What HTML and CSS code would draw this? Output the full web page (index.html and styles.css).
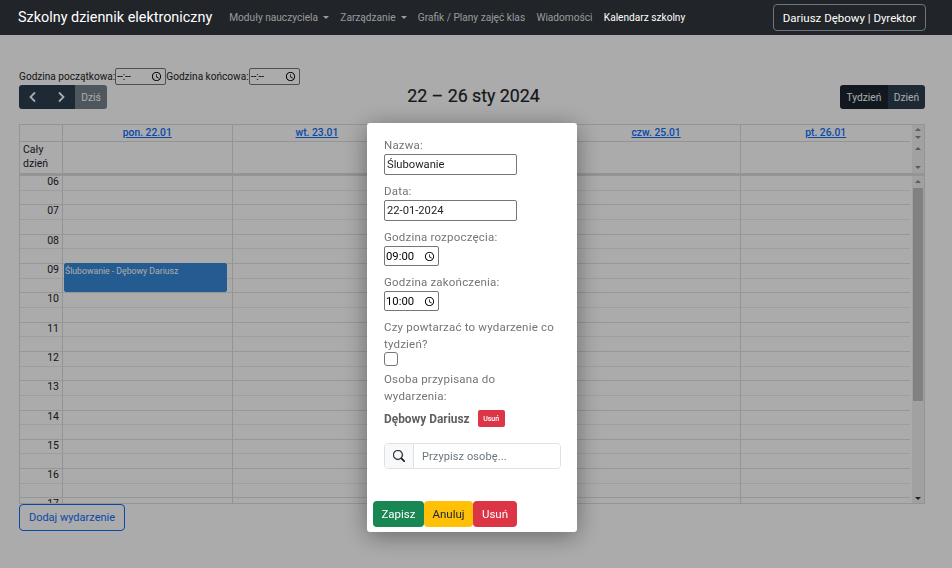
FILE: index.html
```html
<!DOCTYPE html>
<html lang="pl">
<head>
    <meta charset="UTF-8">
    <meta name="viewport" content="width=device-width, initial-scale=1.0">
    <title>Kalendarz szkolny</title>
    <link rel="stylesheet" href="styles.css">
</head>
<body>
    <nav class="navbar">
        <a class="brand" href="#">Szkolny dziennik elektroniczny</a>
        <ul class="nav-links">
            <li class="nav-link caret">Moduły nauczyciela</li>
            <li class="nav-link caret">Zarządzanie</li>
            <li class="nav-link">Grafik / Plany zajęć klas</li>
            <li class="nav-link">Wiadomości</li>
            <li class="nav-link active">Kalendarz szkolny</li>
        </ul>
        <button class="user-btn">Dariusz Dębowy | Dyrektor</button>
    </nav>

    <main class="content">
        <div class="hours-filter">
            <label>Godzina początkowa:</label>
            <input type="time" class="time-small">
            <label>Godzina końcowa:</label>
            <input type="time" class="time-small">
        </div>

        <div class="toolbar">
            <div class="btn-group">
                <button class="fc-btn"><svg width="10" height="12" viewBox="0 0 10 12"><path d="M7 1.500 2.500 6 7 10.500" fill="none" stroke="#fff" stroke-width="1.800"/></svg></button>
                <button class="fc-btn"><svg width="10" height="12" viewBox="0 0 10 12"><path d="M3 1.500 7.500 6 3 10.500" fill="none" stroke="#fff" stroke-width="1.800"/></svg></button>
                <button class="fc-btn today" disabled>Dziś</button>
            </div>
            <h2 class="cal-title">22 – 26 sty 2024</h2>
            <div class="btn-group">
                <button class="fc-btn view selected">Tydzień</button>
                <button class="fc-btn view">Dzień</button>
            </div>
        </div>

        <div class="calendar">
            <div class="cal-head">
                <div class="head-main">
                    <div class="day-row">
                        <div class="axis"></div>
                        <a class="day" href="#">pon. 22.01</a>
                        <a class="day" href="#">wt. 23.01</a>
                        <a class="day" href="#">śr. 24.01</a>
                        <a class="day" href="#">czw. 25.01</a>
                        <a class="day" href="#">pt. 26.01</a>
                    </div>
                    <div class="allday-row">
                        <div class="axis allday-label">Cały dzień</div>
                        <div class="allday-cell"></div>
                        <div class="allday-cell"></div>
                        <div class="allday-cell"></div>
                        <div class="allday-cell"></div>
                        <div class="allday-cell"></div>
                    </div>
                </div>
                <div class="mini-scroll">
                    <div class="mini-track short"><span class="arrow up"></span><span class="arrow down"></span></div>
                    <div class="mini-track tall"><span class="arrow up"></span><span class="arrow down"></span></div>
                </div>
            </div>

            <div class="cal-body">
                <div class="slots">
                    <div class="slot hour"><span class="axis">06</span></div><div class="slot"></div>
                    <div class="slot hour"><span class="axis">07</span></div><div class="slot"></div>
                    <div class="slot hour"><span class="axis">08</span></div><div class="slot"></div>
                    <div class="slot hour"><span class="axis">09</span></div><div class="slot"></div>
                    <div class="slot hour"><span class="axis">10</span></div><div class="slot"></div>
                    <div class="slot hour"><span class="axis">11</span></div><div class="slot"></div>
                    <div class="slot hour"><span class="axis">12</span></div><div class="slot"></div>
                    <div class="slot hour"><span class="axis">13</span></div><div class="slot"></div>
                    <div class="slot hour"><span class="axis">14</span></div><div class="slot"></div>
                    <div class="slot hour"><span class="axis">15</span></div><div class="slot"></div>
                    <div class="slot hour"><span class="axis">16</span></div><div class="slot"></div>
                    <div class="slot hour"><span class="axis">17</span></div><div class="slot"></div>

                    <div class="columns">
                        <div class="axis"></div>
                        <div class="col"><div class="event">Ślubowanie - Dębowy Dariusz</div></div>
                        <div class="col"></div>
                        <div class="col"></div>
                        <div class="col"></div>
                        <div class="col"></div>
                    </div>
                </div>
                <div class="scrollbar">
                    <span class="arrow up"></span>
                    <div class="thumb"></div>
                    <span class="arrow down dark"></span>
                </div>
            </div>
        </div>

        <button class="add-btn">Dodaj wydarzenie</button>
    </main>

    <div class="backdrop"></div>

    <div class="modal">
        <label class="field-label">Nazwa:</label>
        <input type="text" class="text-input" value="Ślubowanie">
        <label class="field-label">Data:</label>
        <input type="text" class="text-input" value="22-01-2024">
        <label class="field-label">Godzina rozpoczęcia:</label>
        <input type="time" class="time-input" value="09:00">
        <label class="field-label">Godzina zakończenia:</label>
        <input type="time" class="time-input" value="10:00">
        <label class="field-label repeat-label">Czy powtarzać to wydarzenie co tydzień?</label>
        <span class="checkbox"></span>
        <label class="field-label person-label">Osoba przypisana do wydarzenia:</label>
        <div class="person">
            <strong>Dębowy Dariusz</strong>
            <button class="btn-remove">Usuń</button>
        </div>
        <div class="search-group">
            <span class="search-icon">
                <svg width="12" height="12" viewBox="0 0 16 16" fill="#212529"><path d="M11.742 10.344a6.500 6.500 0 1 0-1.397 1.398h-.001c.03.04.062.078.098.115l3.850 3.850a1 1 0 0 0 1.415-1.414l-3.850-3.850a1.007 1.007 0 0 0-.115-.1zM12 6.500a5.500 5.500 0 1 1-11 0 5.500 5.500 0 0 1 11 0z" stroke="#212529" stroke-width=".6"/></svg>
            </span>
            <input type="text" class="search-input" placeholder="Przypisz osobę...">
        </div>
        <div class="modal-actions">
            <button class="btn green">Zapisz</button>
            <button class="btn yellow">Anuluj</button>
            <button class="btn red">Usuń</button>
        </div>
    </div>
</body>
</html>
```

FILE: styles.css
```css
* {
    box-sizing: border-box;
}
html, body {
    height: 100%;
}
body {
    margin: 0;
    overflow: hidden;
    font-family: Roboto, "Liberation Sans", sans-serif;
    font-size: 12px;
    color: #212529;
    background-color: #fff;
}
button {
    font-family: inherit;
}

/* pasek nawigacji */
.navbar {
    position: relative;
    z-index: 3;
    display: flex;
    align-items: center;
    height: 35px;
    padding: 0 26px 0 18px;
    background-color: #212529;
}
.brand {
    margin-right: 17px;
    font-size: 14.4px;
    color: #fff;
    text-decoration: none;
}
.nav-links {
    display: flex;
    gap: 11.3px;
    flex: 1;
    margin: 0;
    padding: 0;
    list-style: none;
}
.nav-link {
    font-size: 10.15px;
    color: rgba(255, 255, 255, 0.55);
}
.nav-link.active {
    color: #fff;
}
.caret::after {
    content: "";
    display: inline-block;
    margin-left: 5px;
    vertical-align: 2px;
    border-top: 3px solid;
    border-left: 3px solid transparent;
    border-right: 3px solid transparent;
}
.user-btn {
    height: 27px;
    width: 153px;
    padding: 0;
    font-size: 11.5px;
    color: #fff;
    background: transparent;
    border: 1px solid #6c757d;
    border-radius: 4px;
}

/* strona */
.content {
    padding: 32px 27px 0 19px;
}
.hours-filter {
    display: flex;
    align-items: center;
    height: 18px;
    font-size: 10.1px;
}
.time-small {
    width: 51px;
    height: 17px;
    margin: 0;
    padding: 0 3px 0 1px;
    font: 10px Roboto, sans-serif;
    border: 1px solid #767676;
    border-radius: 2px;
}
input::-webkit-datetime-edit-ampm-field {
    display: none;
}
input::-webkit-datetime-edit-hour-field,
input::-webkit-datetime-edit-minute-field {
    padding: 0;
}
input::-webkit-calendar-picker-indicator {
    margin: 0;
    padding: 0;
    width: 11px;
    height: 11px;
}
.toolbar {
    display: flex;
    align-items: center;
    justify-content: space-between;
    height: 24px;
}
.btn-group {
    display: flex;
    height: 24px;
    border-radius: 3px;
    overflow: hidden;
}
.fc-btn {
    display: flex;
    align-items: center;
    justify-content: center;
    width: 28px;
    padding: 0;
    font-size: 10.2px;
    color: #fff;
    background-color: #2c3e50;
    border: none;
}
.fc-btn.today {
    width: 32px;
    background-color: #2c3e50;
    opacity: 0.65;
}
.fc-btn.view {
    width: 37px;
}
.fc-btn.selected {
    width: 48px;
    background-color: #1a252f;
}
.cal-title {
    margin: 0 0 4px;
    font-size: 17.8px;
    font-weight: 400;
    -webkit-text-stroke: 0.2px;
}

/* kalendarz */
.calendar {
    margin-top: 15px;
    height: 380px;
    border: 1px solid #ddd;
    display: flex;
    flex-direction: column;
}
.cal-head {
    display: flex;
    height: 51px;
    flex: none;
    border-bottom: 3px solid #ddd;
}
.head-main {
    flex: 1;
}
.day-row, .allday-row, .columns {
    display: grid;
    grid-template-columns: 42px repeat(5, 1fr);
}
.day-row {
    height: 17px;
    border-bottom: 1px solid #ddd;
}
.day {
    border-left: 1px solid #ddd;
    font-size: 10.3px;
    font-weight: 500;
    line-height: 16px;
    text-align: center;
    color: #0d6efd;
}
.allday-row {
    height: 31px;
}
.allday-label {
    padding: 1px 11px 0 3px;
    font-size: 10.5px;
    line-height: 14px;
}
.allday-cell {
    border-left: 1px solid #ddd;
}
.mini-scroll {
    flex: none;
    width: 14px;
    background-color: #f1f1f1;
    border-left: 2px solid #fff;
}
.mini-track {
    display: flex;
    flex-direction: column;
    align-items: center;
    justify-content: space-between;
    padding: 3px 0;
}
.mini-track.short {
    height: 17px;
}
.mini-track.tall {
    height: 31px;
    padding: 5px 0 4px;
}
.arrow {
    display: block;
    flex: none;
    border-left: 3px solid transparent;
    border-right: 3px solid transparent;
}
.arrow.up {
    border-bottom: 3px solid #888;
}
.arrow.down {
    border-top: 3px solid #888;
}
.arrow.dark {
    border-top-color: #333;
}
.cal-body {
    display: flex;
    flex: 1;
    min-height: 0;
}
.slots {
    position: relative;
    flex: 1;
    overflow: hidden;
}
.slot {
    height: 14.67px;
    border-bottom: 1px solid #e4e4e4;
}
.slot.hour {
    border-bottom-color: #ececec;
}
.slot:nth-child(even) {
    border-bottom-color: #e2e2e2;
}
.slot .axis {
    display: block;
    width: 42px;
    padding-right: 3px;
    font-size: 10.5px;
    line-height: 12px;
    text-align: right;
}
.columns {
    position: absolute;
    top: 0;
    left: 0;
    right: 0;
    height: 360px;
}
.col {
    position: relative;
    border-left: 1px solid #ddd;
}
.event {
    position: absolute;
    top: 87px;
    left: 1px;
    right: 5px;
    height: 29px;
    padding: 2px 0;
    font-size: 8.7px;
    line-height: 11px;
    color: #fff;
    background-color: #3788d8;
    border: 1px solid #3788d8;
    border-radius: 2px;
}
.scrollbar {
    position: relative;
    flex: none;
    width: 14px;
    padding: 4px 0 3px;
    display: flex;
    flex-direction: column;
    align-items: center;
    background-color: #f1f1f1;
    border-left: 2px solid #fff;
}
.thumb {
    width: 10px;
    height: 213px;
    margin: 5px 0 auto;
    background-color: #c1c1c1;
}
.add-btn {
    display: block;
    height: 27px;
    width: 106px;
    margin-top: 0;
    padding: 0;
    font-size: 11px;
    color: #0d6efd;
    background: transparent;
    border: 1px solid #0d6efd;
    border-radius: 4px;
}

/* okno modalne */
.backdrop {
    position: fixed;
    top: 35px;
    left: 0;
    right: 0;
    bottom: 0;
    z-index: 1;
    background-color: rgba(0, 0, 0, 0.33);
}
.modal {
    position: fixed;
    z-index: 2;
    top: 123px;
    left: 367px;
    width: 210px;
    height: 409px;
    padding: 14px 16px 0 17px;
    background-color: #fff;
    border-radius: 3px;
    box-shadow: 0 4px 24px rgba(0, 0, 0, 0.4);
}
.field-label {
    display: block;
    font-size: 11.5px;
    line-height: 16px;
    letter-spacing: 0.2px;
    color: #757575;
}
.text-input {
    display: block;
    width: 133px;
    height: 21px;
    margin: 1px 0 8px;
    padding: 0 2px;
    font: 11.2px Roboto, sans-serif;
    color: #212529;
    border: 1px solid #767676;
    border-radius: 2px;
}
.time-input {
    display: block;
    width: 55px;
    height: 20px;
    margin: 1px 0 8px;
    padding: 0 3px 0 1px;
    font: 11.3px Roboto, sans-serif;
    border: 1px solid #767676;
    border-radius: 2px;
}
.repeat-label {
    line-height: 16.5px;
}
.checkbox {
    display: block;
    width: 14px;
    height: 14px;
    margin: 0 0 5px;
    border: 1px solid #767676;
    border-radius: 3px;
}
.person-label {
    line-height: 17px;
}
.person {
    display: flex;
    align-items: center;
    gap: 8px;
    height: 17px;
    margin-top: 5px;
    font-size: 11.9px;
    color: #5f5f5f;
}
.btn-remove {
    width: 27px;
    height: 17px;
    padding: 0;
    font-size: 7px;
    font-weight: 500;
    color: #fff;
    background-color: #dc3545;
    border: none;
    border-radius: 2px;
}
.search-group {
    display: flex;
    height: 26px;
    width: 177px;
    margin-top: 16px;
    border: 1px solid #dee2e6;
    border-radius: 4px;
    overflow: hidden;
}
.search-icon {
    display: flex;
    align-items: center;
    justify-content: center;
    flex: none;
    width: 29px;
    background-color: #f8f9fa;
    border-right: 1px solid #dee2e6;
}
.search-input {
    flex: 1;
    min-width: 0;
    padding: 0 8px;
    font: 11px Roboto, sans-serif;
    letter-spacing: 0.1px;
    border: none;
    outline: none;
}
.search-input::placeholder {
    color: #6c757d;
}
.modal-actions {
    display: flex;
    margin: 32px 0 0 -11px;
}
.btn {
    height: 26px;
    padding: 0;
    font-size: 11.5px;
    border: none;
    border-radius: 4px;
}
.btn.green {
    width: 51px;
    color: #fff;
    background-color: #198754;
}
.btn.yellow {
    width: 49px;
    color: #212529;
    background-color: #ffc107;
}
.btn.red {
    width: 44px;
    color: #fff;
    background-color: #dc3545;
}
```
